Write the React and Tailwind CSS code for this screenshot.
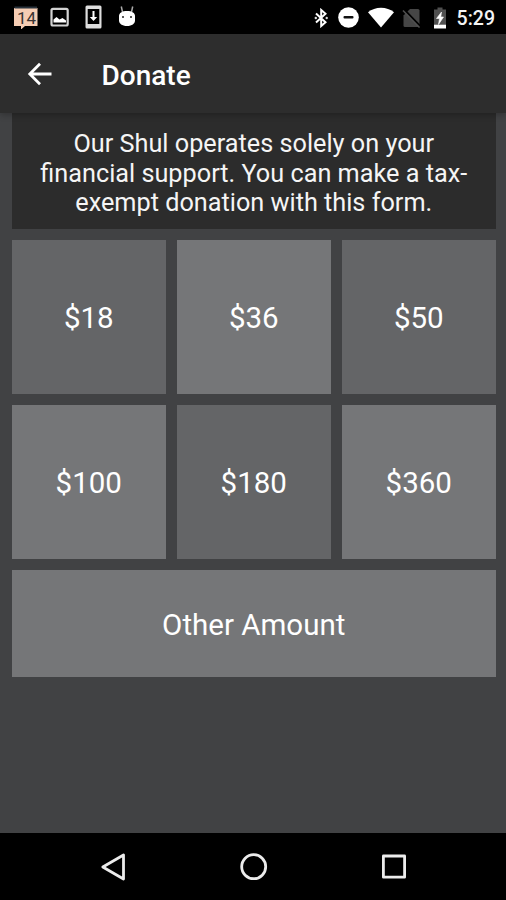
const amounts = [
  { label: '$18', light: false },
  { label: '$36', light: true },
  { label: '$50', light: false },
  { label: '$100', light: true },
  { label: '$180', light: false },
  { label: '$360', light: true },
];

function StatusBar() {
  return (
    <div className="h-[34px] shrink-0 bg-black flex items-center justify-between pl-[14px] pr-[11px]">
      <div className="flex items-center">
        {/* Calendar notification */}
        <svg width="24" height="24" viewBox="0 0 24 24">
          <path d="M0 3h23.500v18H11l-4 3.500v-3.500H0z" fill="#f6cdb4" />
          <path d="M0.500 2.500h22.500" stroke="#28323c" strokeWidth="2" />
          <text x="12.500" y="18.500" textAnchor="middle" fontSize="17" fontFamily="Roboto, sans-serif" fill="#3a3432">14</text>
        </svg>

        {/* Screenshot */}
        <svg className="ml-[12px]" width="19" height="20" viewBox="0 0 19 20">
          <rect x="1.500" y="1.900" width="16.200" height="16.600" rx="1.500" fill="none" stroke="#d2d2d2" strokeWidth="2.200" />
          <path d="M3.500 15.500v-3l3-2.500 3 2.500 3-1.500 3.500 2.500v2z" fill="#fff" />
        </svg>

        {/* System update */}
        <svg className="ml-[16px]" width="17" height="24" viewBox="0 0 17 24">
          <path fillRule="evenodd" d="M2 0.500h13a1.500 1.500 0 0 1 1.500 1.500v20a1.500 1.500 0 0 1-1.500 1.500H2a1.500 1.500 0 0 1-1.500-1.500V2A1.500 1.500 0 0 1 2 .5zM2.700 4v15h11.600V4z" fill="#dedede" />
          <path d="M7.500 6h2v6h2.700l-3.700 4-3.700-4h2.700z" fill="#fff" />
        </svg>

        {/* Android debug */}
        <svg className="ml-[16px]" width="18" height="22" viewBox="0 0 18 22">
          <path d="M3.300 0.500l1.200 5.500M14.700 0.500L13.500 6" stroke="#aaa" strokeWidth="1.500" />
          <path d="M1 10C1 7 4 5 9 5s8 2 8 5v4.500c0 3-3 5.500-8 5.500s-8-2.500-8-5.500z" fill="#fff" />
          <circle cx="5" cy="11" r="1" fill="#222" />
          <circle cx="13" cy="11" r="1" fill="#222" />
        </svg>
      </div>

      <div className="flex items-center">
        {/* Bluetooth */}
        <svg className="mt-px" width="14" height="20" viewBox="0 0 14 20">
          <path d="M2 5.500L11.500 14.200 7.200 18V2L11.500 5.800 2 14.500" fill="none" stroke="#fff" strokeWidth="2" />
          <circle cx="1.800" cy="10" r="1.200" fill="#ddd" />
          <circle cx="12.700" cy="10" r="1.200" fill="#ddd" />
        </svg>

        {/* Do not disturb */}
        <svg className="ml-[10px] mt-px" width="21" height="21" viewBox="0 0 21 21">
          <circle cx="10.500" cy="10.500" r="10.300" fill="#fff" />
          <rect x="5.500" y="9" width="10" height="2.600" rx="1" fill="#111" />
        </svg>

        {/* Wifi */}
        <svg className="ml-[9px]" width="26" height="21" viewBox="0 0 26 21">
          <path d="M0 5.200C7-.9 19-.9 26 5.200L13 20.500z" fill="#fff" />
        </svg>

        {/* No SIM */}
        <svg className="ml-[8px] mt-px" width="19" height="20" viewBox="0 0 19 20">
          <path d="M8 1h8a1.500 1.500 0 0 1 1.500 1.500V19H3a1.500 1.500 0 0 1-1.500-1.500V7.500z" fill="#464646" />
          <path d="M2.500 2L19 19" stroke="#000" strokeWidth="2.200" />
          <path d="M1 2.500L17.500 19.500" stroke="#505050" strokeWidth="1.500" />
        </svg>

        {/* Battery */}
        <svg className="ml-[12px] mt-px" width="14" height="22" viewBox="0 0 14 22">
          <path d="M4.500 0.500h5v2H13V17H1V2.500h3.500z" fill="#505050" />
          <path d="M1 17.500h12v4H1z" fill="#fff" />
          <path d="M8.500 5L3.500 11.500h3L5.500 17.500 10.500 10H7.800z" fill="#fff" stroke="#fff" strokeWidth="0.600" />
        </svg>

        <span className="ml-[10px] mt-[4px] text-[19.500px] leading-none font-medium text-[#f4f4f4]">5:29</span>
      </div>
    </div>
  );
}

function AppBar() {
  return (
    <header className="relative z-10 h-[79px] shrink-0 bg-[#2d2d2d] flex items-center pl-[27px] shadow-[0_2px_6px_rgba(0,0,0,0.25)]">
      <button aria-label="Back">
        <svg width="25" height="24" viewBox="0 0 25 24" fill="none" stroke="#fff" strokeWidth="2.800">
          <path d="M24.500 12H3.500M13 1.800L2.800 12 13 22.200" />
        </svg>
      </button>
      <h1 className="ml-[49.500px] mt-[4px] text-[28px] leading-none font-medium text-white">Donate</h1>
    </header>
  );
}

function NavBar() {
  return (
    <nav className="h-[67px] shrink-0 bg-black flex items-center justify-between pl-[100px] pr-[98px]">
      <svg width="28" height="28" viewBox="0 0 28 28" fill="none" stroke="#ececec" strokeWidth="2.800" strokeLinejoin="round">
        <path d="M23.500 2v24L2.800 14z" />
      </svg>
      <svg width="28" height="28" viewBox="0 0 28 28" fill="none" stroke="#ececec" strokeWidth="2.800">
        <circle cx="13.700" cy="13.700" r="12" />
      </svg>
      <svg width="28" height="28" viewBox="0 0 28 28" fill="none" stroke="#ececec" strokeWidth="2.800" strokeLinejoin="round">
        <rect x="3.400" y="3" width="21.200" height="21.200" />
      </svg>
    </nav>
  );
}

export default function App() {
  return (
    <div className="w-full h-screen flex flex-col overflow-hidden bg-[#414244] font-[Roboto,sans-serif]">
      <StatusBar />
      <AppBar />

      <main className="flex-1 pl-[11.500px] pr-[10px]">
        <p className="h-[115.500px] bg-[#2c2c2c] pt-[16px] text-center text-[25.250px] leading-[29.600px] text-[#f5f5f5]">
          Our Shul operates solely on your<br />
          financial support. You can make a tax-<br />
          exempt donation with this form.
        </p>

        <div className="mt-[11px] grid grid-cols-3 gap-[10.500px]">
          {amounts.map(({ label, light }) => (
            <button
              key={label}
              className={`h-[154.500px] pt-[2px] text-[29.500px] text-white ${light ? 'bg-[#757678]' : 'bg-[#646567]'}`}
            >
              {label}
            </button>
          ))}
          <button className="col-span-3 h-[107.500px] pt-[3px] bg-[#757678] text-[29.500px] text-white">
            Other Amount
          </button>
        </div>
      </main>

      <NavBar />
    </div>
  );
}
